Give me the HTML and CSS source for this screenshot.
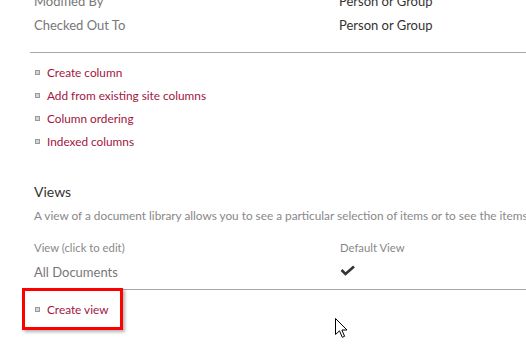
FILE: index.html
```html
<!DOCTYPE html>
<html>
<head>
<meta charset="utf-8">
<link rel="stylesheet" href="styles.css">
</head>
<body>
<div class="page">
  <div class="fields">
    <div class="field-row"><span class="field-name">Modified By</span><span class="field-type">Person or Group</span></div>
    <div class="field-row"><span class="field-name">Checked Out To</span><span class="field-type">Person or Group</span></div>
  </div>
  <hr class="rule rule-top">
  <ul class="links">
    <li><span class="bullet"></span><a class="link" href="#">Create column</a></li>
    <li><span class="bullet"></span><a class="link" href="#">Add from existing site columns</a></li>
    <li><span class="bullet"></span><a class="link" href="#">Column ordering</a></li>
    <li><span class="bullet"></span><a class="link" href="#">Indexed columns</a></li>
  </ul>
  <section class="views">
    <h2 class="views-title">Views</h2>
    <p class="views-desc">A view of a document library allows you to see a particular selection of items or to see the items sorted in a particular order.</p>
    <div class="views-head"><span class="col-name">View (click to edit)</span><span class="col-default">Default View</span></div>
    <div class="views-row"><span class="col-name view-name">All Documents</span><span class="col-default"><svg class="check" width="16" height="12" viewBox="0 0 16 12"><polyline points="1.5,5 5.5,9 14,1.5" fill="none" stroke="#333" stroke-width="2.6"/></svg></span></div>
    <hr class="rule rule-bottom">
    <ul class="links links-create">
      <li class="highlighted"><span class="bullet"></span><a class="link" href="#">Create view</a></li>
    </ul>
  </section>
  <svg class="cursor" width="13" height="21" viewBox="0 0 13 21"><path d="M0.5,0.5 L0.5,16.5 L4.5,12.8 L7.3,19.3 L9.6,18.3 L6.9,12 L12,12 Z" fill="#fff" stroke="#000" stroke-width="1" stroke-linejoin="miter"/></svg>
</div>
</body>
</html>
```
FILE: styles.css
```css
html, body {
  margin: 0;
  padding: 0;
  background: #fff;
}
body {
  font-family: Lato, "Open Sans", sans-serif;
  overflow: hidden;
}
.page {
  position: relative;
  padding-left: 30px;
  width: 526px;
  height: 350px;
  box-sizing: border-box;
  overflow: hidden;
}
.fields {
  margin-top: -11px;
  padding-left: 4px;
}
.field-row {
  display: flex;
  height: 24px;
  align-items: center;
  font-size: 13px;
}
.field-name {
  width: 305px;
  color: #777;
}
.field-type {
  color: #333;
}
.rule {
  border: 0;
  border-top: 1px solid #a6a6a6;
  margin: 0;
}
.rule-top {
  margin-top: 15px;
}
.links {
  list-style: none;
  margin: 0;
  padding: 8px 0 0 5px;
}
.links li {
  display: flex;
  align-items: center;
  height: 23px;
  font-size: 11.8px;
}
.bullet {
  width: 3px;
  height: 3px;
  border: 1px solid #9a9a9a;
  background: #d4d4d4;
  margin-right: 7px;
  margin-top: -1px;
}
.link {
  color: #a2163e;
  text-decoration: none;
}
.views {
  padding-left: 4px;
  margin-top: 29px;
}
.views-title {
  margin: 0;
  font-weight: normal;
  font-size: 14px;
  color: #333;
  line-height: 20px;
}
.views-desc {
  margin: 4px 0 0;
  font-size: 11.8px;
  color: #888;
  line-height: 20px;
  white-space: nowrap;
}
.views-head {
  display: flex;
  font-size: 11.3px;
  color: #888;
  margin-top: 14px;
  line-height: 16px;
}
.col-name {
  width: 306px;
}
.views-row {
  display: flex;
  align-items: center;
  margin-top: 6px;
  height: 20px;
}
.view-name {
  font-size: 13px;
  color: #777;
}
.check {
  display: block;
  margin-top: -2px;
}
.rule-bottom {
  margin-left: -4px;
  margin-top: 7px;
}
.links-create {
  padding: 8px 0 0 1px;
}
.highlighted {
  position: relative;
}
.highlighted::after {
  content: "";
  position: absolute;
  left: -13px;
  top: -10px;
  width: 95px;
  height: 36px;
  border: 3px solid #f00;
  box-shadow: 2px 2px 3px rgba(0, 0, 0, 0.3);
}
.cursor {
  position: absolute;
  left: 335px;
  top: 318px;
}
```
